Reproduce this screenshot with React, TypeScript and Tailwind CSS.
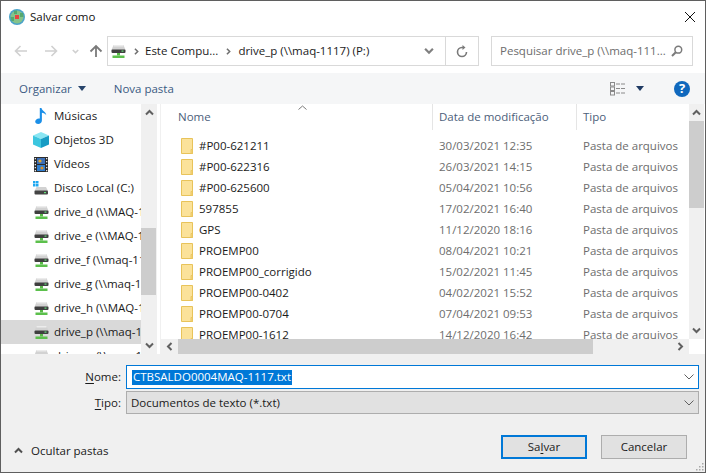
import React from "react";

const font = '"Open Sans","Noto Sans","Liberation Sans",sans-serif';

function Drive() {
  return (
    <svg width="15" height="13" viewBox="0 0 15 13" className="shrink-0">
      <path d="M2.500 0h10L14.500 5H.5z" fill="#d2d2d2" />
      <rect x="2.500" y="0" width="10" height="1.500" fill="#ececec" />
      <rect x=".5" y="4.500" width="14" height="3.500" rx="1" fill="#3f3f3f" />
      <rect x="10.500" y="5.500" width="2" height="1.200" fill="#63e07a" />
      <rect x="6" y="8" width="3" height="2.500" fill="#58b947" />
      <rect x="1.500" y="10.500" width="12" height="2.500" fill="#5cc04c" />
    </svg>
  );
}

function LocalDisk() {
  return (
    <svg width="16" height="14" viewBox="0 0 16 14" className="shrink-0">
      <rect x="0" y="0" width="2.500" height="2.500" fill="#1ea7f0" />
      <rect x="3" y="0" width="2.500" height="2.500" fill="#1ea7f0" />
      <rect x="0" y="3" width="2.500" height="2.500" fill="#1ea7f0" />
      <rect x="3" y="3" width="2.500" height="2.500" fill="#1ea7f0" />
      <path d="M3.500 6h9.500l2 4H1.500z" fill="#d2d2d2" />
      <rect x="1.500" y="9.500" width="13.500" height="4" rx="1" fill="#444" />
      <rect x="11" y="11" width="2" height="1.200" fill="#63e07a" />
    </svg>
  );
}

function Music() {
  return (
    <svg width="12" height="16" viewBox="0 0 12 16" className="shrink-0">
      <path d="M4.800 0H6.500c.3 2.800 4.300 3.400 4.800 7.200C10.400 5.700 8.400 5 6.900 4.800V12.600C6.900 14.700 5.100 16 3.200 16 1.400 16 .2 14.900.2 13.500.2 11.800 2 10.400 3.800 10.400c.4 0 .7 0 1 .1z" fill="#1b8fe8" />
    </svg>
  );
}

function Cube() {
  return (
    <svg width="16" height="16" viewBox="0 0 16 16" className="shrink-0">
      <path d="M8 0l8 3.500L8 7 0 3.500z" fill="#8ae6f3" />
      <path d="M0 3.500L8 7v9L0 12.500z" fill="#3cc6df" />
      <path d="M16 3.500L8 7v9l8-3.500z" fill="#179cc4" />
    </svg>
  );
}

function Film() {
  return (
    <svg width="14" height="15" viewBox="0 0 14 15" className="shrink-0">
      <rect width="14" height="15" fill="#2c2c2c" />
      {[1, 4, 7, 10, 13].map((y) => (
        <g key={y}>
          <rect x="0.700" y={y} width="1.300" height="1.300" fill="#e8e8e8" />
          <rect x="12" y={y} width="1.300" height="1.300" fill="#e8e8e8" />
        </g>
      ))}
      <rect x="3" y="1" width="8" height="6" fill="#3b6fb8" />
      <rect x="3" y="8" width="8" height="6" fill="#2f7ed0" />
      <circle cx="6" cy="4" r="1.600" fill="#e3a72b" />
      <circle cx="8" cy="11" r="1.600" fill="#d9902a" />
    </svg>
  );
}

function Folder() {
  return (
    <svg width="12" height="16" viewBox="0 0 12 16" className="shrink-0">
      <path d="M.5.5h11v15H.5z" fill="#fbe29a" stroke="#e8c35a" />
      <path d="M10 11.500h1.500v4H10z" fill="#f5d67c" stroke="#e8c35a" strokeWidth="0.800" />
    </svg>
  );
}

function Chev({ dir, color = "#606060", size = 9 }: { dir: "up" | "down" | "left" | "right"; color?: string; size?: number }) {
  const d = {
    up: "M1 6.500L4.500 3 8 6.500",
    down: "M1 2.500L4.500 6 8 2.500",
    left: "M6.500 1L3 4.500 6.500 8",
    right: "M2.500 1L6 4.500 2.500 8",
  }[dir];
  return (
    <svg width={size} height={size} viewBox="0 0 9 9" className="shrink-0">
      <path d={d} fill="none" stroke={color} strokeWidth="2" />
    </svg>
  );
}

function Thin() {
  return (
    <svg width="10" height="6" viewBox="0 0 10 6" className="shrink-0">
      <path d="M.5.5L5 5 9.500.5" fill="none" stroke="#606060" />
    </svg>
  );
}

const side: [string, React.ReactNode][] = [
  ["Músicas", <Music />],
  ["Objetos 3D", <Cube />],
  ["Vídeos", <Film />],
  ["Disco Local (C:)", <LocalDisk />],
  ["drive_d (\\\\MAQ-1117) (D:)", <Drive />],
  ["drive_e (\\\\MAQ-1117) (E:)", <Drive />],
  ["drive_f (\\\\maq-1117) (F:)", <Drive />],
  ["drive_g (\\\\maq-1117) (G:)", <Drive />],
  ["drive_h (\\\\MAQ-1117) (H:)", <Drive />],
  ["drive_p (\\\\maq-1117) (P:)", <Drive />],
  ["drive_q (\\\\maq-1117) (Q:)", <Drive />],
];

const files = [
  ["#P00-621211", "30/03/2021 12:35"],
  ["#P00-622316", "26/03/2021 14:15"],
  ["#P00-625600", "05/04/2021 10:56"],
  ["597855", "17/02/2021 16:40"],
  ["GPS", "11/12/2020 18:16"],
  ["PROEMP00", "08/04/2021 10:21"],
  ["PROEMP00_corrigido", "15/02/2021 11:45"],
  ["PROEMP00-0402", "04/02/2021 15:52"],
  ["PROEMP00-0704", "07/04/2021 09:53"],
  ["PROEMP00-1612", "14/12/2020 16:42"],
];

export default function App() {
  return (
    <div
      className="w-[706px] h-[473px] bg-white border border-[#5f5f5f] flex flex-col overflow-hidden text-[11.5px] leading-none text-[#1a1a1a]"
      style={{ fontFamily: font }}
    >
      {/* title */}
      <div className="h-[30px] flex items-center shrink-0 pl-[8px] pr-[6px] pt-[1px]">
        <svg width="16" height="16" viewBox="0 0 16 16" className="shrink-0">
          <circle cx="8" cy="8" r="8" fill="#4aa3c9" />
          <circle cx="8" cy="8" r="6.500" fill="#86c38a" />
          <path d="M1.500 8H5v4H2.500zM11 4h3l.5 4H11zM5 1.800L8 1.500V5H5z" fill="#55a86e" />
          <rect x="6" y="6" width="4" height="4" fill="#e8423f" />
        </svg>
        <span className="ml-[5px] text-[#111]">Salvar como</span>
        <svg width="12" height="12" viewBox="0 0 12 12" className="ml-auto mr-[3px]">
          <path d="M1 1l10 10M11 1L1 11" stroke="#111" strokeWidth="1" />
        </svg>
      </div>
      {/* nav */}
      <div className="h-[42px] shrink-0 flex items-start pt-[5px]">
        <div className="w-[106px] h-[30px] flex items-center pl-[13px] shrink-0">
          <svg width="14" height="12" viewBox="0 0 14 12">
            <path d="M13 6H2M6.500 1L1.500 6l5 5" fill="none" stroke="#d0d0d0" strokeWidth="1.600" />
          </svg>
          <svg width="14" height="12" viewBox="0 0 14 12" className="ml-[16px]">
            <path d="M1 6h11M7.500 1l5 5-5 5" fill="none" stroke="#d0d0d0" strokeWidth="1.600" />
          </svg>
          <span className="ml-[14px]"><Chev dir="down" color="#d0d0d0" size={7} /></span>
          <svg width="14" height="14" viewBox="0 0 14 14" className="ml-[10px]">
            <path d="M7 13V2M1.500 7.500L7 2l5.500 5.500" fill="none" stroke="#7a7a7a" strokeWidth="1.800" />
          </svg>
        </div>
        <div className="w-[372px] h-[30px] border border-[#d9d9d9] flex items-center shrink-0 pl-[3px]">
          <Drive />
          <span className="ml-[7px]"><Chev dir="right" color="#707070" size={7} /></span>
          <span className="ml-[5px] text-[#1a1a1a] whitespace-nowrap">Este Compu...</span>
          <span className="ml-[7px]"><Chev dir="right" color="#707070" size={7} /></span>
          <span className="ml-[6px] whitespace-nowrap">drive_p (\\maq-1117) (P:)</span>
          <span className="ml-auto mr-[11px]"><Chev dir="down" color="#808080" size={10} /></span>
          <div className="w-[33px] h-full border-l border-[#d9d9d9] flex items-center justify-center">
            <svg width="12" height="13" viewBox="0 0 12 13">
              <path d="M10.500 7A4.500 4.500 0 1 1 6 2.500h2" fill="none" stroke="#7a7a7a" strokeWidth="1.600" />
              <path d="M6.500 0l3 2.500-3 2.500z" fill="#7a7a7a" />
            </svg>
          </div>
        </div>
        <div className="ml-[12px] w-[202px] h-[30px] border border-[#d9d9d9] flex items-center pl-[8px] pr-[9px] text-[#6d6d6d] whitespace-nowrap">
          <span>Pesquisar drive_p (\\maq-111...</span>
          <svg width="12" height="12" viewBox="0 0 12 12" className="ml-auto">
            <circle cx="7.300" cy="4.700" r="3.400" fill="none" stroke="#7a7a7a" strokeWidth="1.500" />
            <path d="M4.800 7.200L1 11" stroke="#7a7a7a" strokeWidth="2" />
          </svg>
        </div>
      </div>
      {/* toolbar */}
      <div className="h-[31px] shrink-0 bg-[#f5f6f7] flex items-center text-[#3b5a82] pl-[18px] pr-[15px]">
        <span>Organizar</span>
        <svg width="8" height="5" viewBox="0 0 8 5" className="ml-[6px]"><path d="M0 0h8L4 5z" fill="#27446b" /></svg>
        <span className="ml-[28px]">Nova pasta</span>
        <svg width="16" height="14" viewBox="0 0 16 14" className="ml-auto">
          <rect x=".5" y=".5" width="4" height="3.500" fill="none" stroke="#8a8a8a" />
          <rect x=".5" y="5" width="4" height="3.500" fill="none" stroke="#8a8a8a" />
          <rect x=".5" y="9.500" width="4" height="3.500" fill="none" stroke="#8a8a8a" />
          <path d="M6 2h10M6 6.500h10M6 11h10" stroke="#8a8a8a" strokeDasharray="4 1" />
        </svg>
        <svg width="8" height="5" viewBox="0 0 8 5" className="ml-[10px]"><path d="M0 0h8L4 5z" fill="#1f3a63" /></svg>
        <div className="ml-[30px] w-[16px] h-[16px] rounded-full bg-[#0f68bd] text-white flex items-center justify-center font-bold text-[13px]">?</div>
      </div>
      {/* content */}
      <div className="h-[250px] shrink-0 flex">
        {/* sidebar */}
        <div className="w-[140px] shrink-0 overflow-hidden">
          {side.map(([label, icon], i) => (
            <div key={i} className={`h-[24px] flex items-center whitespace-nowrap overflow-hidden ${i === 9 ? "bg-[#d9d9d9]" : ""}`}>
              <div className="w-[16px] ml-[32px] mr-[5px] flex justify-center shrink-0">{icon}</div>
              <span>{label}</span>
            </div>
          ))}
        </div>
        {/* side scrollbar */}
        <div className="w-[16px] shrink-0 bg-[#f0f0f0] flex flex-col items-center">
          <div className="h-[17px] flex items-center justify-center shrink-0"><Chev dir="up" /></div>
          <div className="h-[107px] shrink-0" />
          <div className="w-[15px] self-start h-[67px] bg-[#cdcdcd] shrink-0" />
          <div className="flex-1" />
          <div className="h-[17px] flex items-center justify-center shrink-0"><Chev dir="down" /></div>
        </div>
        <div className="w-[4px] shrink-0 border-r border-[#f0f0f0]" />
        {/* right */}
        <div className="flex-1 min-w-0 flex flex-col">
          <div className="flex-1 min-h-0 flex">
            <div className="flex-1 min-w-0 overflow-hidden relative">
              <svg width="9" height="5" viewBox="0 0 9 5" className="absolute left-[137px] top-[1px]">
                <path d="M.5 4.500L4.500 1l4 3.500" fill="none" stroke="#7a7a7a" />
              </svg>
              <div className="h-[26px] flex text-[#4c607a] items-center">
                <div className="w-[272px] pl-[17px] h-[26px] pt-[7px] border-r border-[#e5e5e5]">Nome</div>
                <div className="w-[144px] pl-[6px] h-[26px] pt-[7px] border-r border-[#e5e5e5]">Data de modificação</div>
                <div className="pl-[6px] h-[26px] pt-[7px]">Tipo</div>
              </div>
              <div className="pt-[5px]">
                {files.map(([n, d]) => (
                  <div key={n} className="h-[21px] flex items-center whitespace-nowrap">
                    <div className="w-[272px] pl-[20px] flex items-center">
                      <Folder />
                      <span className="ml-[6px]">{n}</span>
                    </div>
                    <div className="w-[144px] pl-[6px] text-[#6d6d6d]">{d}</div>
                    <div className="pl-[6px] text-[#6d6d6d]">Pasta de arquivos</div>
                  </div>
                ))}
              </div>
            </div>
            <div className="w-[15px] shrink-0 bg-[#f0f0f0] flex flex-col items-center">
              <div className="h-[17px] flex items-center justify-center shrink-0"><Chev dir="up" /></div>
              <div className="w-full h-[87px] bg-[#cdcdcd] shrink-0" />
              <div className="flex-1" />
              <div className="h-[17px] flex items-center justify-center shrink-0"><Chev dir="down" /></div>
            </div>
            <div className="w-[1px] shrink-0" />
          </div>
          <div className="h-[15px] shrink-0 flex">
            <div className="flex-1 bg-[#f0f0f0] flex items-center">
              <div className="w-[17px] flex justify-center shrink-0"><Chev dir="left" /></div>
              <div className="w-[415px] h-full bg-[#cdcdcd] shrink-0" />
              <div className="flex-1" />
              <div className="w-[17px] flex justify-center shrink-0"><Chev dir="right" /></div>
            </div>
            <div className="w-[16px] shrink-0" />
          </div>
        </div>
      </div>
      {/* bottom */}
      <div className="flex-1 bg-[#f0f0f0] flex flex-col relative">
        <div className="mt-[11px] h-[24px] flex items-center">
          <div className="w-[125px] text-right pr-[5px]"><span className="underline underline-offset-2">N</span>ome:</div>
          <div className="w-[573px] h-[24px] border border-[#0078d7] bg-white flex items-center pl-[5px] pr-[4px]">
            <span className="bg-[#0078d7] text-white px-[1px] h-[15px] flex items-center">CTBSALDO0004MAQ-1117.txt</span>
            <span className="ml-auto"><Thin /></span>
          </div>
        </div>
        <div className="mt-[2px] h-[23px] flex items-center">
          <div className="w-[125px] text-right pr-[5px]"><span className="underline underline-offset-2">T</span>ipo:</div>
          <div className="w-[573px] h-[23px] border border-[#adadad] bg-[#e1e1e1] flex items-center pl-[4px] pr-[4px]">
            <span>Documentos de texto (*.txt)</span>
            <span className="ml-auto"><Thin /></span>
          </div>
        </div>
        <div className="mt-[21px] flex items-start">
          <div className="flex items-center pl-[13px] pt-[10px]">
            <Chev dir="up" color="#505050" />
            <span className="ml-[8px]">Ocultar pastas</span>
          </div>
          <div className="ml-auto flex mr-[18px]">
            <div className="w-[86px] h-[24px] border-2 border-[#0078d7] bg-[#e1e1e1] flex items-center justify-center">
              <span>Sa<span className="underline underline-offset-2">l</span>var</span>
            </div>
            <div className="ml-[14px] w-[86px] h-[24px] border border-[#adadad] bg-[#e1e1e1] flex items-center justify-center">Cancelar</div>
          </div>
        </div>
        <svg width="9" height="9" viewBox="0 0 9 9" className="absolute right-[1px] bottom-[1px]">
          {[[7, 1], [7, 4], [7, 7], [4, 4], [4, 7], [1, 7]].map(([x, y]) => (
            <rect key={`${x}-${y}`} x={x} y={y} width="1.500" height="1.500" fill="#a8a8a8" />
          ))}
        </svg>
      </div>
    </div>
  );
}
